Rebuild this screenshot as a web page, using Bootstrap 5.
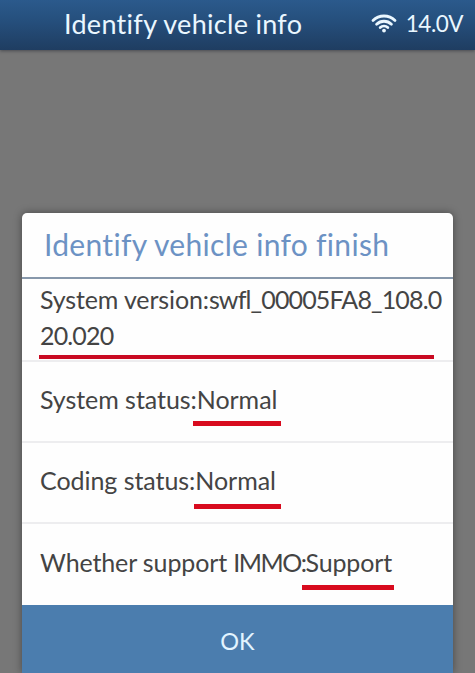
<!DOCTYPE html>
<html lang="en">
<head>
<meta charset="utf-8">
<meta name="viewport" content="width=device-width, initial-scale=1">
<title>Identify vehicle info</title>
<link href="https://cdn.jsdelivr.net/npm/bootstrap@5.3.0/dist/css/bootstrap.min.css" rel="stylesheet">
<style>
body { background: #777; font-family: Lato, "Noto Sans", sans-serif; font-variant-ligatures: none; color: #444; height: 673px; overflow: hidden; }
.topbar { height: 50px; background: linear-gradient(#2b5a8c, #254e7b 45%, #1f3d61); color: #eaf7ff; box-shadow: 0 1px 3px rgba(40,45,55,.6); padding: 0 12px 3px 64px; }
.topbar h1 { font-size: 27px; letter-spacing: .3px; line-height: 47px; font-weight: 400; }
.volt { font-size: 22.5px; line-height: 46px; letter-spacing: -.5px; }
.wifi { margin: 0 9px 2px 0; }
.dialog { width: 431px; height: 460px; margin: 163px 0 0 22px; background: #fefefe; border-radius: 5px 5px 0 0; box-shadow: 0 0 9px rgba(0,0,0,.4); }
.dialog h2 { height: 66px; padding-left: 22px; font-size: 30px; letter-spacing: .3px; line-height: 62px; font-weight: 400; color: #6c92c4; border-bottom: 2px solid #8798ab; }
.info { font-size: 25px; letter-spacing: -.05px; }
.info li { height: 81px; padding: 0 0 4px 18px; border-bottom: 2px solid #ededef; white-space: nowrap; }
.info li:last-child { border-bottom: 0; padding-bottom: 3px; letter-spacing: -.13px; }
.info li:first-child { height: 83px; line-height: 35.5px; padding: 0 0 4px 18px; letter-spacing: -.13px; }
.digits { letter-spacing: -.85px; }
.info .caps { letter-spacing: -1.5px; }
.stroke { position: absolute; background: #d80b1e; height: 5px; }
.s1 { left: 17px; top: 76px; width: 395px; height: 4px; background: #c90a22; }
.s2 { left: 171px; top: 59px; width: 88px; }
.s3 { left: 172px; top: 61px; width: 87px; }
.s4 { left: 280px; top: 61px; width: 92px; }
.ok { height: 68px; font-size: 23.5px; background: #4b7dae; color: #e2f4ff; padding: 6px 0 0; }
</style>
</head>
<body>
<header class="topbar d-flex align-items-center justify-content-between">
  <h1 class="m-0"><span>Identify vehicle info</span></h1>
  <div class="d-flex align-items-center volt">
    <svg class="wifi" width="26" height="20" viewBox="0 0 26 20" fill="none" stroke="#eaf7ff" stroke-width="2.8" stroke-linecap="round">
      <path d="M2 7.600A15.500 15.500 0 0 1 24 7.600M5.600 11.300A10.500 10.500 0 0 1 20.400 11.300M9.200 14.600A5.500 5.500 0 0 1 16.800 14.600"/>
      <circle cx="13" cy="17.600" r="1.900" fill="#eaf7ff" stroke="none"/>
    </svg>
    <span>14.0V</span>
  </div>
</header>
<main class="dialog d-flex flex-column">
  <h2 class="m-0 flex-shrink-0"><span>Identify vehicle info finish</span></h2>
  <ul class="info list-unstyled m-0 flex-grow-1">
    <li class="position-relative d-flex flex-column justify-content-center"><span>System version:<span class="digits">swfl_00005FA8_108.0</span></span><span class="digits">20.020</span><i class="stroke s1"></i></li>
    <li class="position-relative d-flex align-items-center"><span>System status:Normal</span><i class="stroke s2"></i></li>
    <li class="position-relative d-flex align-items-center"><span>Coding status:Normal</span><i class="stroke s3"></i></li>
    <li class="position-relative d-flex align-items-center"><span>Whether support <span class="caps">IMMO:</span>Support</span><i class="stroke s4"></i></li>
  </ul>
  <button type="button" class="ok btn border-0 rounded-0 w-100 flex-shrink-0">OK</button>
</main>
<script src="https://cdn.jsdelivr.net/npm/bootstrap@5.3.0/dist/js/bootstrap.bundle.min.js"></script>
</body>
</html>
